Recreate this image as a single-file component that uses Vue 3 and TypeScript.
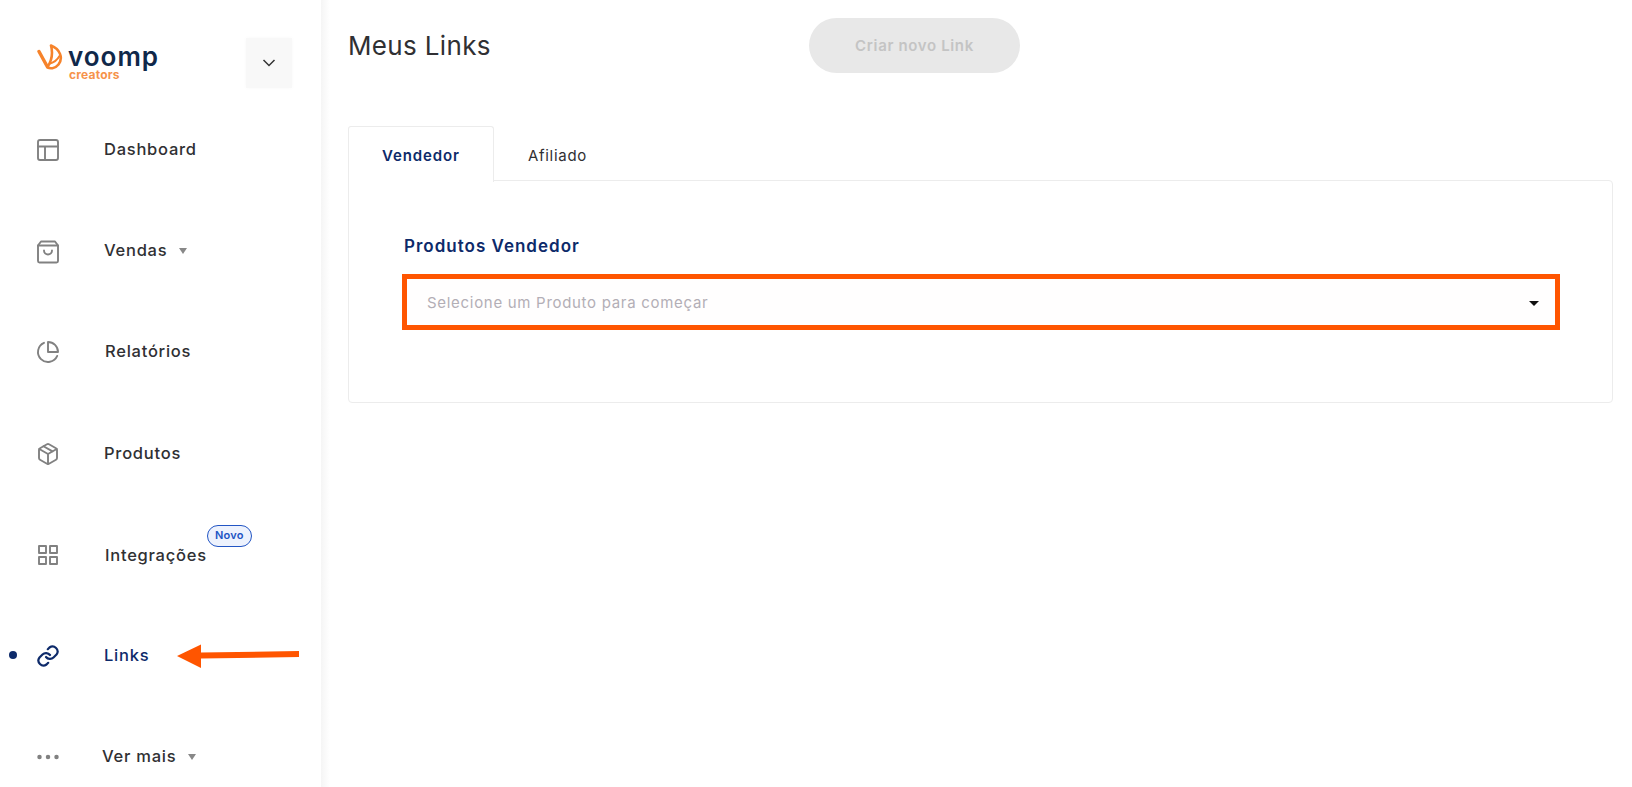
<script setup lang="ts">
interface NavItem {
  label: string;
  icon: string;
  caret?: boolean;
  active?: boolean;
  badge?: string;
  nudge?: string;
}
const items: NavItem[] = [
  { label: 'Dashboard', icon: 'layout' },
  { label: 'Vendas', icon: 'bag', caret: true },
  { label: 'Relatórios', icon: 'pie', nudge: 'n1' },
  { label: 'Produtos', icon: 'box' },
  { label: 'Integrações', icon: 'grid', badge: 'Novo', nudge: 'n1' },
  { label: 'Links', icon: 'link', active: true },
  { label: 'Ver mais', icon: 'more', caret: true, nudge: 'nm' },
];
</script>

<template>
  <div class="page">
    <aside class="sidebar">
      <div class="brand">
        <div class="logo">
          <svg class="mark" width="26" height="26" viewBox="0 0 26 26" fill="none" stroke="#f6832b" stroke-linecap="round" stroke-linejoin="round">
            <path d="M2 7.500 L10.500 23" stroke-width="3.400" />
            <path d="M14 1.500 C23 5 26.500 14 21.500 20.500 C18 25 12.500 25 10.500 23 C14.500 17 16 9 14 1.500 Z" stroke-width="2.600" />
            <path d="M13 19.500 C17 18.500 20.500 15.500 22.500 12" stroke-width="2" />
          </svg>
          <div class="wordmark">
            <span class="voomp">voomp</span>
            <span class="creators">creators</span>
          </div>
        </div>
        <button class="collapse" aria-label="Recolher">
          <svg width="14" height="8" viewBox="0 0 14 8" fill="none">
            <path d="M1.500 1 L7 6.500 L12.500 1" stroke="#333" stroke-width="1.500" />
          </svg>
        </button>
      </div>
      <nav class="nav">
        <a v-for="item in items" :key="item.label" class="nav-item" :class="[{ active: item.active }, item.nudge, 'i-' + item.icon]">
          <span class="dot" />
          <svg class="icon" width="24" height="24" viewBox="0 0 24 24" fill="none" stroke="currentColor" stroke-width="1.900" stroke-linecap="round" stroke-linejoin="round">
            <template v-if="item.icon === 'layout'">
              <rect x="2" y="2" width="20" height="20" rx="2" />
              <path d="M2 8.500H22M9 8.500V22" />
            </template>
            <template v-else-if="item.icon === 'bag'">
              <path d="M5 1.500H19L22 5.500V21A1.500 1.500 0 0 1 20.500 22.500H3.500A1.500 1.500 0 0 1 2 21V5.500Z" />
              <path d="M2 5.500H22M8 10.500A4 4 0 0 0 16 10.500" />
            </template>
            <template v-else-if="item.icon === 'pie'">
              <path d="M21.200 15.900A10 10 0 1 1 8 2.800" />
              <path d="M22 12A10 10 0 0 0 12 2V12Z" />
            </template>
            <template v-else-if="item.icon === 'box'">
              <path d="M21 16V8A2 2 0 0 0 20 6.300L13 2.300A2 2 0 0 0 11 2.300L4 6.300A2 2 0 0 0 3 8V16A2 2 0 0 0 4 17.700L11 21.700A2 2 0 0 0 13 21.700L20 17.700A2 2 0 0 0 21 16Z" />
              <path d="M7.500 4.200L16.500 9.400M3.300 7L12 12L20.700 7M12 22V12" />
            </template>
            <template v-else-if="item.icon === 'grid'">
              <rect x="3" y="3" width="7" height="7" />
              <rect x="14" y="3" width="7" height="7" />
              <rect x="3" y="14" width="7" height="7" />
              <rect x="14" y="14" width="7" height="7" />
            </template>
            <template v-else-if="item.icon === 'link'">
              <path d="M10 13A5 5 0 0 0 17.500 13.500L20.500 10.500A5 5 0 0 0 13.500 3.500L11.800 5.200" stroke-width="2.200" />
              <path d="M14 11A5 5 0 0 0 6.500 10.500L3.500 13.500A5 5 0 0 0 10.500 20.500L12.200 18.800" stroke-width="2.200" />
            </template>
            <template v-else>
              <circle cx="3.500" cy="12" r="1.300" fill="currentColor" />
              <circle cx="12" cy="12" r="1.300" fill="currentColor" />
              <circle cx="20.500" cy="12" r="1.300" fill="currentColor" />
            </template>
          </svg>
          <span class="label">
            {{ item.label }}
            <span v-if="item.badge" class="badge">{{ item.badge }}</span>
          </span>
          <span v-if="item.caret" class="caret" />
        </a>
      </nav>
      <svg class="arrow" width="124" height="26" viewBox="0 0 124 26">
        <path d="M1 13 L25 1.500 V9.500 L123 8 V14 L25 15.500 V25 Z" fill="#ff5500" />
      </svg>
    </aside>

    <main class="main">
      <header class="topbar">
        <h1>Meus Links</h1>
        <button class="create" disabled>Criar novo Link</button>
      </header>

      <div class="tabs">
        <div class="tab selected">Vendedor</div>
        <div class="tab">Afiliado</div>
      </div>
      <section class="panel">
        <label class="field-label">Produtos Vendedor</label>
        <div class="select">
          <span class="placeholder">Selecione um Produto para começar</span>
          <span class="select-caret" />
        </div>
      </section>
    </main>
  </div>
</template>

<style>
html, body { margin: 0; background: #fff; overflow: hidden; }
</style>

<style scoped>
.page {
  display: flex;
  width: 1632px;
  height: 787px;
  overflow: hidden;
  background: #fff;
  font-family: Inter, "Open Sans", sans-serif;
  color: #303033;
}
.sidebar {
  position: relative;
  flex: 0 0 321px;
  box-sizing: border-box;
  height: 787px;
  background: #fff;
}
.sidebar::after {
  content: "";
  position: absolute;
  top: 0;
  left: 100%;
  width: 9px;
  height: 100%;
  background: linear-gradient(to right, #f5f5f5, #fff);
}
.brand {
  display: flex;
  align-items: center;
  justify-content: space-between;
  height: 98px;
  padding: 0 29px 0 37px;
  box-sizing: border-box;
}
.logo {
  display: flex;
  align-items: flex-start;
  gap: 5px;
  margin-top: 27px;
}
.wordmark {
  display: flex;
  flex-direction: column;
  margin-top: 0;
}
.voomp {
  font-size: 26px;
  font-weight: 600;
  line-height: 25px;
  letter-spacing: 1px;
  color: #10284a;
}
.creators {
  font-size: 12px;
  font-weight: 700;
  line-height: 12px;
  letter-spacing: 0.200px;
  color: #f6934b;
  margin-left: 1px;
}
.collapse {
  width: 46px;
  height: 50px;
  margin-top: 28px;
  border: 0;
  background: #f8f8f8;
  box-shadow: 0 0 4px #f8f8f8;
  display: flex;
  align-items: center;
  justify-content: center;
  padding: 0;
}
.nav {
  display: flex;
  flex-direction: column;
}
.nav-item {
  display: flex;
  align-items: center;
  height: 101.300px;
  padding-left: 9px;
  color: #303033;
  font-size: 16.500px;
  font-weight: 500;
  letter-spacing: 0.750px;
}
.dot {
  width: 8px;
  height: 8px;
  border-radius: 50%;
  background: transparent;
  margin-right: 19px;
  flex: none;
}
.icon {
  flex: none;
  color: #818181;
  margin-top: 2px;
  margin-right: 44px;
}
.i-bag .icon { margin-top: 4px; }
.n1 .icon { margin-right: 45px; }
.nm .icon { margin-right: 42px; }
.label {
  position: relative;
  white-space: nowrap;
}
.i-grid .label { top: 1px; }
.active { color: #0d2a6a; }
.active .dot { background: #0d2a6a; }
.active .icon { color: #0d2a6a; }
.caret {
  width: 0;
  height: 0;
  border-left: 4px solid transparent;
  border-right: 4px solid transparent;
  border-top: 6px solid #888;
  margin-left: 12px;
  margin-top: 2px;
}
.badge {
  position: absolute;
  left: 100%;
  top: -20px;
  width: 45px;
  height: 22px;
  box-sizing: border-box;
  border: 1px solid #2255c4;
  border-radius: 11px;
  background: #edf2fd;
  color: #2255c4;
  font-size: 11px;
  font-weight: 600;
  letter-spacing: 0.200px;
  line-height: 19px;
  text-align: center;
}
.arrow {
  position: absolute;
  left: 176px;
  top: 643px;
}
.main {
  flex: 1;
  padding: 0 19px 0 27px;
  min-width: 0;
}
.topbar {
  display: flex;
  align-items: center;
  height: 92px;
}
h1 {
  margin: 0 0 2px;
  width: 461px;
  font-size: 26px;
  font-weight: 400;
  letter-spacing: 0.350px;
  color: #303033;
}
.create {
  width: 211px;
  height: 55px;
  border: 0;
  border-radius: 28px;
  background: #e8e8e8;
  color: #c4c4c4;
  font: 600 15px Inter, sans-serif;
  letter-spacing: 0.650px;
  margin-bottom: 1px;
}
.tabs {
  display: flex;
  margin-top: 34px;
  height: 54px;
  position: relative;
  z-index: 1;
}
.tab {
  width: 125px;
  box-sizing: border-box;
  display: flex;
  align-items: center;
  justify-content: center;
  font-size: 15px;
  font-weight: 400;
  letter-spacing: 0.700px;
  color: #303033;
  padding-top: 4px;
  padding-left: 2px;
}
.tab.selected {
  width: 146px;
  height: 56px;
  padding-top: 2px;
  padding-left: 0;
  background: #fff;
  border: 1px solid #ececec;
  border-bottom: 0;
  border-radius: 3px 3px 0 0;
  font-weight: 600;
  letter-spacing: 0.900px;
  color: #0d2a6a;
}
.panel {
  box-sizing: border-box;
  height: 223px;
  border: 1px solid #ececec;
  border-radius: 0 4px 4px 4px;
  padding: 53px 52px 0 53px;
}
.field-label {
  display: block;
  font-size: 17px;
  font-weight: 600;
  line-height: 24px;
  letter-spacing: 1px;
  color: #0d2a6a;
  margin-left: 2px;
}
.select {
  display: flex;
  align-items: center;
  justify-content: space-between;
  box-sizing: border-box;
  height: 56px;
  margin-top: 16px;
  padding: 1px 16px 0 20px;
  border: 5px solid #ff5500;
  background: #fffefe;
}
.placeholder {
  font-size: 15px;
  letter-spacing: 0.700px;
  color: #b3aeb6;
}
.select-caret {
  width: 0;
  height: 0;
  margin-top: 2px;
  border-left: 5px solid transparent;
  border-right: 5px solid transparent;
  border-top: 5px solid #111;
}
</style>
